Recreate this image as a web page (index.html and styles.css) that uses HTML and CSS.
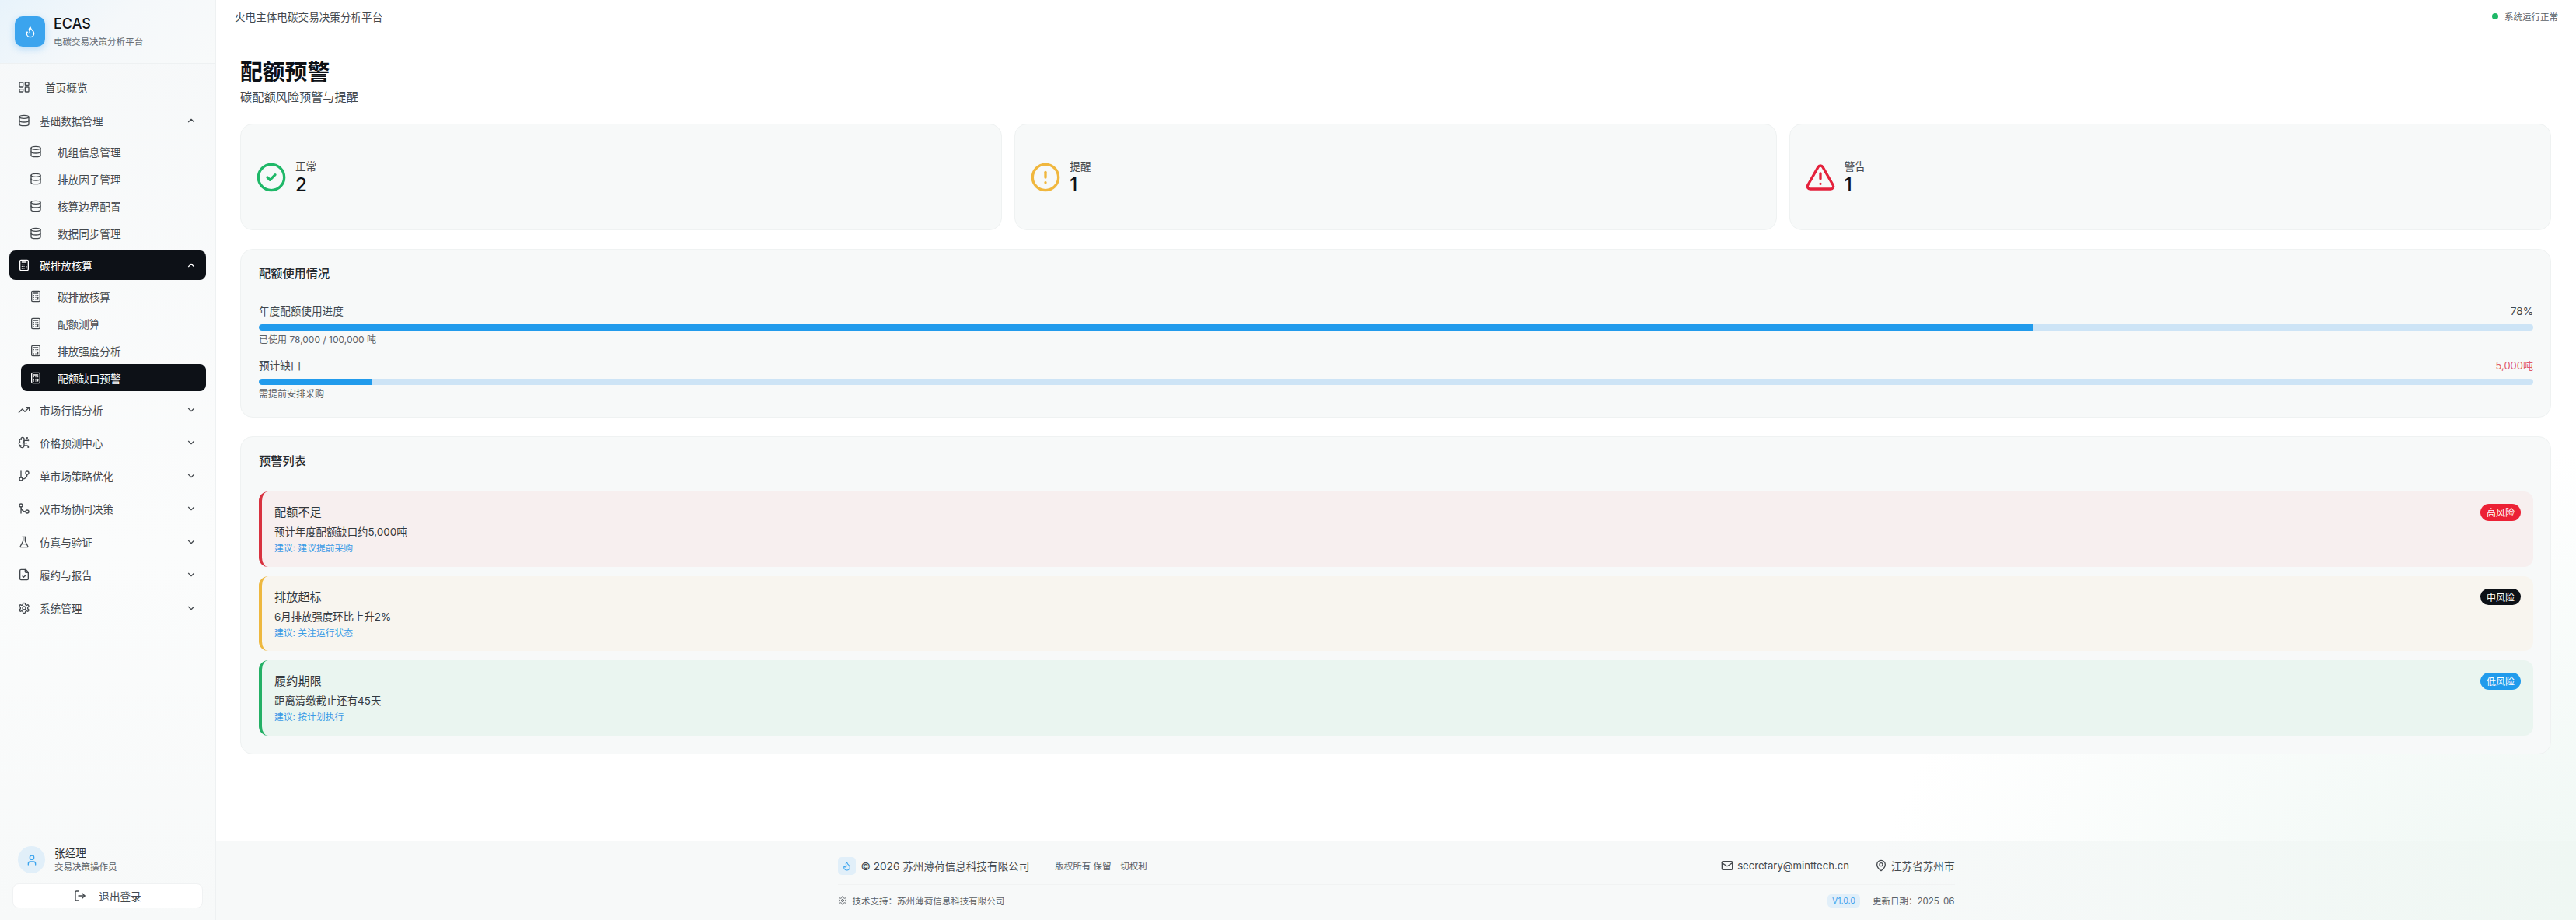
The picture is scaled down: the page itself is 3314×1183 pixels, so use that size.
FILE: index.html
```html
<!DOCTYPE html>
<html lang="zh-CN">
<head>
    <meta charset="UTF-8">
    <meta name="viewport" content="width=device-width, initial-scale=1.0">
    <title>ECAS - 配额预警</title>
    <link rel="stylesheet" href="styles.css">
</head>
<body>
    <!-- icon set -->
    <svg class="icon-defs" xmlns="http://www.w3.org/2000/svg">
        <symbol id="i-dash" viewBox="0 0 24 24"><rect x="3" y="3" width="7" height="9" rx="1"/><rect x="14" y="3" width="7" height="5" rx="1"/><rect x="14" y="12" width="7" height="9" rx="1"/><rect x="3" y="16" width="7" height="5" rx="1"/></symbol>
        <symbol id="i-db" viewBox="0 0 24 24"><ellipse cx="12" cy="5" rx="9" ry="3"/><path d="M3 5V19A9 3 0 0 0 21 19V5"/><path d="M3 12A9 3 0 0 0 21 12"/></symbol>
        <symbol id="i-calc" viewBox="0 0 24 24"><rect x="4" y="2" width="16" height="20" rx="2"/><line x1="8" y1="6" x2="16" y2="6"/><line x1="16" y1="14" x2="16" y2="18"/><path d="M16 10h.01M12 10h.01M8 10h.01M12 14h.01M8 14h.01M12 18h.01M8 18h.01"/></symbol>
        <symbol id="i-trend" viewBox="0 0 24 24"><path d="M16 7h6v6"/><path d="m22 7-8.5 8.5-5-5L2 17"/></symbol>
        <symbol id="i-brain" viewBox="0 0 24 24"><path d="M12 5a3 3 0 1 0-5.997.125 4 4 0 0 0-2.526 5.77 4 4 0 0 0 .556 6.588A4 4 0 1 0 12 18Z"/><path d="M9 13a4.5 4.5 0 0 0 3-4"/><path d="M6.003 5.125A3 3 0 0 0 6.401 6.5"/><path d="M3.477 10.896a4 4 0 0 1 .585-.396"/><path d="M6 18a4 4 0 0 1-1.967-.516"/><path d="M12 13h4"/><path d="M12 18h6a2 2 0 0 1 2 2v1"/><path d="M12 8h8"/><path d="M16 8V5a2 2 0 0 1 2-2"/><circle cx="16" cy="13" r=".5"/><circle cx="18" cy="3" r=".5"/><circle cx="20" cy="21" r=".5"/><circle cx="20" cy="8" r=".5"/></symbol>
        <symbol id="i-branch" viewBox="0 0 24 24"><line x1="6" y1="3" x2="6" y2="15"/><circle cx="18" cy="6" r="3"/><circle cx="6" cy="18" r="3"/><path d="M18 9a9 9 0 0 1-9 9"/></symbol>
        <symbol id="i-merge" viewBox="0 0 24 24"><circle cx="18" cy="18" r="3"/><circle cx="6" cy="6" r="3"/><path d="M6 21V9a9 9 0 0 0 9 9"/></symbol>
        <symbol id="i-flask" viewBox="0 0 24 24"><path d="M10 2v7.527a2 2 0 0 1-.211.896L4.72 20.55a1 1 0 0 0 .9 1.45h12.76a1 1 0 0 0 .9-1.45l-5.069-10.127A2 2 0 0 1 14 9.527V2"/><path d="M8.5 2h7"/><path d="M7 16h10"/></symbol>
        <symbol id="i-file" viewBox="0 0 24 24"><path d="M15 2H6a2 2 0 0 0-2 2v16a2 2 0 0 0 2 2h12a2 2 0 0 0 2-2V7Z"/><path d="M14 2v4a2 2 0 0 0 2 2h4"/><path d="m9 15 2 2 4-4"/></symbol>
        <symbol id="i-gear" viewBox="0 0 24 24"><path d="M12.22 2h-.44a2 2 0 0 0-2 2v.18a2 2 0 0 1-1 1.73l-.43.25a2 2 0 0 1-2 0l-.15-.08a2 2 0 0 0-2.73.73l-.22.38a2 2 0 0 0 .73 2.73l.15.1a2 2 0 0 1 1 1.72v.51a2 2 0 0 1-1 1.74l-.15.09a2 2 0 0 0-.73 2.73l.22.38a2 2 0 0 0 2.73.73l.15-.08a2 2 0 0 1 2 0l.43.25a2 2 0 0 1 1 1.73V20a2 2 0 0 0 2 2h.44a2 2 0 0 0 2-2v-.18a2 2 0 0 1 1-1.73l.43-.25a2 2 0 0 1 2 0l.15.08a2 2 0 0 0 2.73-.73l.22-.39a2 2 0 0 0-.73-2.73l-.15-.08a2 2 0 0 1-1-1.74v-.5a2 2 0 0 1 1-1.74l.15-.09a2 2 0 0 0 .73-2.73l-.22-.38a2 2 0 0 0-2.73-.73l-.15.08a2 2 0 0 1-2 0l-.43-.25a2 2 0 0 1-1-1.73V4a2 2 0 0 0-2-2z"/><circle cx="12" cy="12" r="3"/></symbol>
        <symbol id="i-up" viewBox="0 0 24 24"><path d="m18 15-6-6-6 6"/></symbol>
        <symbol id="i-down" viewBox="0 0 24 24"><path d="m6 9 6 6 6-6"/></symbol>
        <symbol id="i-check" viewBox="0 0 24 24"><circle cx="12" cy="12" r="10"/><path d="m9 12 2 2 4-4"/></symbol>
        <symbol id="i-alert" viewBox="0 0 24 24"><circle cx="12" cy="12" r="10"/><line x1="12" y1="8" x2="12" y2="12"/><line x1="12" y1="16" x2="12.01" y2="16"/></symbol>
        <symbol id="i-warn" viewBox="0 0 24 24"><path d="m21.73 18-8-14a2 2 0 0 0-3.48 0l-8 14A2 2 0 0 0 4 21h16a2 2 0 0 0 1.73-3"/><path d="M12 9v4"/><path d="M12 17h.01"/></symbol>
        <symbol id="i-flame" viewBox="0 0 24 24"><path d="M8.5 14.5A2.5 2.5 0 0 0 11 12c0-1.38-.5-2-1-3-1.072-2.143-.224-4.054 2-6 .5 2.5 2 4.9 4 6.5 2 1.6 3 3.5 3 5.5a7 7 0 1 1-14 0c0-1.153.433-2.294 1-3a2.5 2.5 0 0 0 2.5 2.5z"/></symbol>
        <symbol id="i-user" viewBox="0 0 24 24"><path d="M19 21v-2a4 4 0 0 0-4-4H9a4 4 0 0 0-4 4v2"/><circle cx="12" cy="7" r="4"/></symbol>
        <symbol id="i-logout" viewBox="0 0 24 24"><path d="M9 21H5a2 2 0 0 1-2-2V5a2 2 0 0 1 2-2h4"/><polyline points="16 17 21 12 16 7"/><line x1="21" y1="12" x2="9" y2="12"/></symbol>
        <symbol id="i-mail" viewBox="0 0 24 24"><rect x="2" y="4" width="20" height="16" rx="2"/><path d="m22 7-8.97 5.7a1.94 1.94 0 0 1-2.06 0L2 7"/></symbol>
        <symbol id="i-pin" viewBox="0 0 24 24"><path d="M20 10c0 6-8 12-8 12s-8-6-8-12a8 8 0 0 1 16 0Z"/><circle cx="12" cy="10" r="3"/></symbol>
    </svg>

    <aside class="sidebar">
        <div class="brand">
            <div class="brand-logo"><svg class="icon"><use href="#i-flame"/></svg></div>
            <div>
                <div class="brand-name">ECAS</div>
                <div class="brand-sub">电碳交易决策分析平台</div>
            </div>
        </div>

        <nav class="nav">
            <a class="nav-item nav-home"><svg class="icon"><use href="#i-dash"/></svg><span>首页概览</span></a>

            <a class="nav-item"><svg class="icon"><use href="#i-db"/></svg><span>基础数据管理</span><svg class="icon chevron"><use href="#i-up"/></svg></a>
            <div class="sub-nav">
                <a class="sub-item"><svg class="icon"><use href="#i-db"/></svg><span>机组信息管理</span></a>
                <a class="sub-item"><svg class="icon"><use href="#i-db"/></svg><span>排放因子管理</span></a>
                <a class="sub-item"><svg class="icon"><use href="#i-db"/></svg><span>核算边界配置</span></a>
                <a class="sub-item"><svg class="icon"><use href="#i-db"/></svg><span>数据同步管理</span></a>
            </div>

            <a class="nav-item active"><svg class="icon"><use href="#i-calc"/></svg><span>碳排放核算</span><svg class="icon chevron"><use href="#i-up"/></svg></a>
            <div class="sub-nav">
                <a class="sub-item"><svg class="icon"><use href="#i-calc"/></svg><span>碳排放核算</span></a>
                <a class="sub-item"><svg class="icon"><use href="#i-calc"/></svg><span>配额测算</span></a>
                <a class="sub-item"><svg class="icon"><use href="#i-calc"/></svg><span>排放强度分析</span></a>
                <a class="sub-item active"><svg class="icon"><use href="#i-calc"/></svg><span>配额缺口预警</span></a>
            </div>

            <a class="nav-item"><svg class="icon"><use href="#i-trend"/></svg><span>市场行情分析</span><svg class="icon chevron"><use href="#i-down"/></svg></a>
            <a class="nav-item"><svg class="icon"><use href="#i-brain"/></svg><span>价格预测中心</span><svg class="icon chevron"><use href="#i-down"/></svg></a>
            <a class="nav-item"><svg class="icon"><use href="#i-branch"/></svg><span>单市场策略优化</span><svg class="icon chevron"><use href="#i-down"/></svg></a>
            <a class="nav-item"><svg class="icon"><use href="#i-merge"/></svg><span>双市场协同决策</span><svg class="icon chevron"><use href="#i-down"/></svg></a>
            <a class="nav-item"><svg class="icon"><use href="#i-flask"/></svg><span>仿真与验证</span><svg class="icon chevron"><use href="#i-down"/></svg></a>
            <a class="nav-item"><svg class="icon"><use href="#i-file"/></svg><span>履约与报告</span><svg class="icon chevron"><use href="#i-down"/></svg></a>
            <a class="nav-item"><svg class="icon"><use href="#i-gear"/></svg><span>系统管理</span><svg class="icon chevron"><use href="#i-down"/></svg></a>
        </nav>

        <div class="side-foot">
            <div class="user">
                <div class="avatar"><svg class="icon"><use href="#i-user"/></svg></div>
                <div>
                    <div class="user-name">张经理</div>
                    <div class="user-role">交易决策操作员</div>
                </div>
            </div>
            <button class="logout"><svg class="icon"><use href="#i-logout"/></svg>退出登录</button>
        </div>
    </aside>

    <main class="main">
        <header class="topbar">
            <span class="topbar-title">火电主体电碳交易决策分析平台</span>
            <span class="status"><i class="status-dot"></i>系统运行正常</span>
        </header>

        <section class="content">
            <h1 class="page-title">配额预警</h1>
            <p class="page-sub">碳配额风险预警与提醒</p>

            <div class="stats">
                <div class="card stat">
                    <svg class="icon stat-icon green"><use href="#i-check"/></svg>
                    <div><div class="stat-label">正常</div><div class="stat-value">2</div></div>
                </div>
                <div class="card stat">
                    <svg class="icon stat-icon yellow"><use href="#i-alert"/></svg>
                    <div><div class="stat-label">提醒</div><div class="stat-value">1</div></div>
                </div>
                <div class="card stat">
                    <svg class="icon stat-icon red"><use href="#i-warn"/></svg>
                    <div><div class="stat-label">警告</div><div class="stat-value">1</div></div>
                </div>
            </div>

            <div class="card usage">
                <h3 class="card-title usage-title">配额使用情况</h3>
                <div class="progress">
                    <div class="progress-head"><span>年度配额使用进度</span><span>78%</span></div>
                    <div class="track"><div class="fill" style="width: 78%"></div></div>
                    <div class="progress-note">已使用 78,000 / 100,000 吨</div>
                </div>
                <div class="progress">
                    <div class="progress-head"><span>预计缺口</span><span class="gap-value">5,000吨</span></div>
                    <div class="track"><div class="fill" style="width: 5%"></div></div>
                    <div class="progress-note">需提前安排采购</div>
                </div>
            </div>

            <div class="card alerts">
                <h3 class="card-title alerts-title">预警列表</h3>
                <div class="alert alert-red">
                    <div>
                        <div class="alert-title">配额不足</div>
                        <div class="alert-desc">预计年度配额缺口约5,000吨</div>
                        <div class="alert-tip">建议: 建议提前采购</div>
                    </div>
                    <span class="badge badge-red">高风险</span>
                </div>
                <div class="alert alert-yellow">
                    <div>
                        <div class="alert-title">排放超标</div>
                        <div class="alert-desc">6月排放强度环比上升2%</div>
                        <div class="alert-tip">建议: 关注运行状态</div>
                    </div>
                    <span class="badge badge-dark">中风险</span>
                </div>
                <div class="alert alert-green">
                    <div>
                        <div class="alert-title">履约期限</div>
                        <div class="alert-desc">距离清缴截止还有45天</div>
                        <div class="alert-tip">建议: 按计划执行</div>
                    </div>
                    <span class="badge badge-blue">低风险</span>
                </div>
            </div>
        </section>

        <footer class="footer">
            <div class="footer-inner">
                <div class="footer-row footer-top">
                    <div class="footer-group">
                        <span class="footer-logo"><svg class="icon"><use href="#i-flame"/></svg></span>
                        <span class="copy">© 2026 苏州薄荷信息科技有限公司</span>
                        <i class="footer-sep"></i>
                        <span class="rights">版权所有 保留一切权利</span>
                    </div>
                    <div class="footer-group">
                        <svg class="icon footer-icon"><use href="#i-mail"/></svg>
                        <span class="copy email">secretary@minttech.cn</span>
                        <i class="footer-sep"></i>
                        <svg class="icon footer-icon"><use href="#i-pin"/></svg>
                        <span class="copy">江苏省苏州市</span>
                    </div>
                </div>
                <div class="footer-row footer-bottom">
                    <div class="footer-group tech">
                        <svg class="icon tech-icon"><use href="#i-gear"/></svg>
                        <span>技术支持：苏州薄荷信息科技有限公司</span>
                    </div>
                    <div class="footer-group tech">
                        <span class="version">V1.0.0</span>
                        <span>更新日期：2025-06</span>
                    </div>
                </div>
            </div>
        </footer>
    </main>
</body>
</html>
```

FILE: styles.css
```css
* {
    box-sizing: border-box;
}
html, body {
    height: 100%;
}
body {
    margin: 0;
    display: flex;
    overflow: hidden;
    background: #fff;
    color: #0d1117;
    font-family: Inter, "Noto Sans CJK SC", sans-serif;
}
.icon-defs {
    display: none;
}
.icon {
    width: 16px;
    height: 16px;
    flex: none;
    fill: none;
    stroke: currentColor;
    stroke-width: 2;
    stroke-linecap: round;
    stroke-linejoin: round;
}

/* sidebar */
.sidebar {
    width: 278px;
    flex: none;
    display: flex;
    flex-direction: column;
    background: linear-gradient(180deg, #f6f8f9 0%, #fbfcfc 60%, #f7f9f9 100%);
    border-right: 1px solid #eef1f2;
}
.brand {
    height: 82px;
    flex: none;
    display: flex;
    align-items: center;
    gap: 11px;
    padding: 0 19px;
    border-bottom: 1px solid #eef1f2;
    background: linear-gradient(135deg, #e8f3fb 0%, #f5f8fa 50%, #f8fafa 100%);
}
.brand-logo {
    width: 39px;
    height: 39px;
    display: flex;
    align-items: center;
    justify-content: center;
    border-radius: 10px;
    background: #3ba4ee;
    color: #fff;
    box-shadow: 0 3px 10px rgba(33, 150, 243, .28);
}
.brand-name {
    font-size: 18px;
    line-height: 24px;
    font-weight: 500;
}
.brand-sub {
    margin-top: 3px;
    font-size: 11.52px;
    line-height: 16px;
    color: #6a7076;
}
.nav {
    flex: 1;
    display: flex;
    flex-direction: column;
    gap: 4.5px;
    padding: 11px 12px 0;
    font-size: 13.6px;
    color: #43484d;
}
.nav-item {
    height: 38px;
    flex: none;
    display: flex;
    align-items: center;
    gap: 12px;
    padding: 0 11px;
    border-radius: 8px;
}
.nav-home {
    gap: 19px;
}
.nav-item .chevron {
    margin-left: auto;
    margin-right: 1px;
    width: 14px;
    height: 14px;
}
.sub-nav {
    display: flex;
    flex-direction: column;
    margin-left: 15px;
}
.sub-item {
    height: 34.75px;
    display: flex;
    align-items: center;
    gap: 20px;
    padding-left: 11px;
    border-radius: 8px;
}
.nav-item.active, .sub-item.active {
    background: #0d1117;
    color: #fff;
}
.side-foot {
    flex: none;
    height: 111px;
    padding: 15px 16px 0;
    border-top: 1px solid #eef1f2;
}
.user {
    display: flex;
    align-items: center;
    gap: 12px;
    padding-left: 7px;
}
.avatar {
    width: 35px;
    height: 35px;
    display: flex;
    align-items: center;
    justify-content: center;
    border-radius: 50%;
    background: #e1eff9;
    color: #3ba4ee;
}
.user-name {
    font-size: 13.6px;
    line-height: 19px;
    color: #2d3237;
}
.user-role {
    font-size: 11.52px;
    line-height: 16px;
    color: #5b6167;
}
.logout {
    width: 245px;
    height: 32px;
    margin-top: 13px;
    display: flex;
    align-items: center;
    justify-content: center;
    gap: 16px;
    background: #fff;
    border: 1px solid #f0f2f3;
    border-radius: 8px;
    font: inherit;
    font-size: 13.6px;
    color: #43484d;
}

/* main column */
.main {
    flex: 1;
    min-width: 0;
    display: flex;
    flex-direction: column;
    background: radial-gradient(ellipse 900px 600px at 100% 100%, #eef7f3 0%, #fff 100%);
}
.topbar {
    height: 43px;
    flex: none;
    display: flex;
    align-items: center;
    justify-content: space-between;
    padding: 0 23px 0 24px;
    background: #fff;
    border-bottom: 1px solid #f3f5f5;
}
.topbar-title {
    font-size: 13.6px;
    color: #43484d;
}
.status {
    display: flex;
    align-items: center;
    gap: 8px;
    font-size: 11.52px;
    color: #5b6167;
}
.status-dot {
    width: 8px;
    height: 8px;
    border-radius: 50%;
    background: #1fb868;
}
.content {
    flex: 1;
    padding: 32px 32px 0 31px;
}
.page-title {
    margin: 0;
    font-size: 28.8px;
    line-height: 36px;
    font-weight: 600;
}
.page-sub {
    margin: 2px 0 22px;
    font-size: 15.2px;
    line-height: 24px;
    color: #43484d;
}
.card {
    background: #f7f9f9;
    border: 1px solid #eff2f2;
    border-radius: 16px;
}
.stats {
    display: grid;
    grid-template-columns: repeat(3, 1fr);
    gap: 16px;
}
.stat {
    height: 137px;
    display: flex;
    align-items: center;
    gap: 11px;
    padding-left: 19px;
}
.stat-icon {
    width: 40px;
    height: 40px;
}
.green { color: #1fb868; }
.yellow { color: #f0b73e; }
.red { color: #e4223c; }
.stat-label {
    font-size: 13.6px;
    line-height: 20px;
    color: #43484d;
}
.stat-value {
    font-size: 24px;
    line-height: 28px;
    font-weight: 500;
}
.card-title {
    margin: 0;
    font-size: 15.2px;
    line-height: 16px;
    font-weight: 500;
    color: #24292e;
}
.usage {
    margin-top: 24px;
    padding: 23px 22px 22px 23px;
}
.usage-title {
    margin-bottom: 30px;
}
.progress + .progress {
    margin-top: 16px;
}
.progress-head {
    display: flex;
    justify-content: space-between;
    font-size: 13.6px;
    line-height: 20px;
    color: #43484d;
}
.gap-value {
    font-size: 13px;
    color: #e05a6a;
}
.track {
    height: 8px;
    margin-top: 7px;
    border-radius: 4px;
    background: #cde4f6;
    overflow: hidden;
}
.fill {
    height: 100%;
    border-radius: 4px 0 0 4px;
    background: #219bec;
}
.progress-note {
    margin-top: 4px;
    font-size: 12px;
    line-height: 15px;
    color: #5b6167;
}
.alerts {
    margin-top: 24px;
    padding: 23px 22px 23px 23px;
}
.alerts-title {
    margin-bottom: 31px;
}
.alert {
    height: 96.5px;
    display: flex;
    justify-content: space-between;
    align-items: flex-start;
    padding: 16px;
    border-left: 4px solid;
    border-radius: 12px;
}
.alert + .alert {
    margin-top: 12px;
}
.alert-red { background: #f7efef; border-color: #d8323f; }
.alert-yellow { background: #f8f5ef; border-color: #eeb83f; }
.alert-green { background: #eaf5f0; border-color: #23b065; }
.alert-title {
    font-size: 15.2px;
    line-height: 22px;
    color: #33383d;
}
.alert-desc {
    margin-top: 4px;
    font-size: 13.4px;
    line-height: 20px;
    color: #33383d;
}
.alert-tip {
    margin-top: 2px;
    font-size: 11.8px;
    line-height: 18px;
    color: #3a9ae6;
}
.badge {
    width: 52px;
    height: 21.5px;
    display: flex;
    align-items: center;
    justify-content: center;
    border-radius: 11px;
    font-size: 12px;
    color: #fff;
}
.badge-red { background: #ec2135; }
.badge-dark { background: #0d1117; }
.badge-blue { background: #219bec; }

/* footer */
.footer {
    height: 102px;
    flex: none;
    background: linear-gradient(90deg, #f7f9f9 0%, #f7f9f9 70%, #eff7f3 100%);
    border-top: 1px solid #f3f5f5;
}
.footer-inner {
    width: 1437px;
    margin: 0 auto;
}
.footer-row {
    display: flex;
    align-items: center;
    justify-content: space-between;
}
.footer-top {
    height: 36px;
    margin-top: 20px;
    padding-bottom: 13px;
    border-bottom: 1px solid #f1f3f3;
}
.footer-bottom {
    height: 40px;
}
.footer-group {
    display: flex;
    align-items: center;
}
.footer-logo {
    width: 23px;
    height: 23px;
    margin-right: 7px;
    display: flex;
    align-items: center;
    justify-content: center;
    border-radius: 5px;
    background: #e1eff9;
    color: #3ba4ee;
}
.footer-logo .icon {
    width: 13px;
    height: 13px;
}
.copy {
    font-size: 13.6px;
    color: #43484d;
}
.email {
    font-size: 13.12px;
}
.rights {
    font-size: 11.52px;
    color: #5b6167;
}
.footer-sep {
    width: 1px;
    height: 14px;
    margin: 0 16px;
    background: #e6eaea;
}
.footer-icon {
    margin-right: 5px;
    color: #43484d;
}
.tech {
    font-size: 11.52px;
    color: #5b6167;
}
.tech-icon {
    width: 12px;
    height: 12px;
    margin-right: 7px;
}
.version {
    height: 17px;
    margin-right: 16px;
    padding: 0 6px;
    display: flex;
    align-items: center;
    border-radius: 5px;
    background: #e1eff9;
    font-size: 10.5px;
    color: #3ba4ee;
}
```
